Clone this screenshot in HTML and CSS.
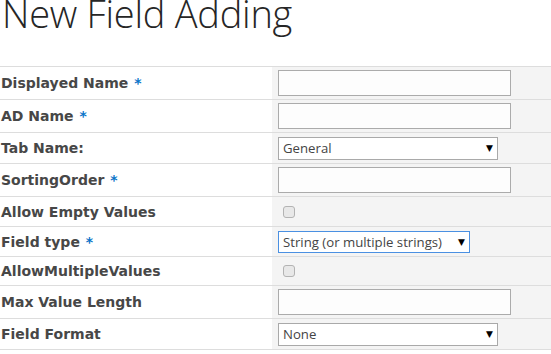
FILE: index.html
```html
<!DOCTYPE html>
<html lang="en">
<head>
    <meta charset="UTF-8">
    <title>New Field Adding</title>
    <link rel="stylesheet" href="styles.css">
</head>
<body>
    <div class="title-bar">
        <h1 class="page-title">New Field Adding</h1>
    </div>

    <div class="form-table">
        <div class="form-row row-text">
            <div class="form-label">Displayed Name <span class="req">*</span></div>
            <div class="form-value"><input type="text" class="text-input"></div>
        </div>
        <div class="form-row row-text">
            <div class="form-label">AD Name <span class="req">*</span></div>
            <div class="form-value"><input type="text" class="text-input"></div>
        </div>
        <div class="form-row row-select">
            <div class="form-label">Tab Name:</div>
            <div class="form-value">
                <div class="select-wrap wide">
                    <select class="select-input"><option>General</option></select>
                </div>
            </div>
        </div>
        <div class="form-row row-text">
            <div class="form-label">SortingOrder <span class="req">*</span></div>
            <div class="form-value"><input type="text" class="text-input"></div>
        </div>
        <div class="form-row row-check">
            <div class="form-label">Allow Empty Values</div>
            <div class="form-value"><input type="checkbox" class="check-input"></div>
        </div>
        <div class="form-row row-check">
            <div class="form-label">Field type <span class="req">*</span></div>
            <div class="form-value">
                <div class="select-wrap narrow">
                    <select class="select-input focused"><option>String (or multiple strings)</option></select>
                </div>
            </div>
        </div>
        <div class="form-row row-short">
            <div class="form-label">AllowMultipleValues</div>
            <div class="form-value"><input type="checkbox" class="check-input"></div>
        </div>
        <div class="form-row row-text">
            <div class="form-label">Max Value Length</div>
            <div class="form-value"><input type="text" class="text-input"></div>
        </div>
        <div class="form-row row-select">
            <div class="form-label">Field Format</div>
            <div class="form-value">
                <div class="select-wrap wide">
                    <select class="select-input"><option>None</option></select>
                </div>
            </div>
        </div>
    </div>
</body>
</html>
```

FILE: styles.css
```css
body {
    margin: 0;
    background: #fff;
    font-family: "DejaVu Sans", Verdana, sans-serif;
}

/* Titel-Bereich, 66px hoch */
.title-bar {
    height: 66px;
}
.page-title {
    margin: 0;
    padding-left: 2px;
    font-family: "Open Sans", "Segoe UI", sans-serif;
    font-weight: 300;
    font-size: 38px;
    letter-spacing: -0.25px;
    line-height: 44px;
    transform: translateY(-9px);
    color: #262626;
}

.form-table {
    border-top: 1px solid #ddd;
}

.form-row {
    display: grid;
    grid-template-columns: 272px 1fr;
    border-bottom: 1px solid #ddd;
}
.row-text { height: 32px; }
.row-select { height: 30px; }
.row-check { height: 29px; }
.row-short { height: 28px; }

.form-label {
    display: flex;
    align-items: center;
    padding-left: 1px;
    font-size: 14px;
    font-weight: bold;
    color: #474747;
    white-space: pre;
}
.req {
    color: #0a74c8;
    margin-left: 1px;
}

.form-value {
    display: flex;
    align-items: center;
    padding-left: 6px;
    background: #f4f4f4;
}

.text-input {
    box-sizing: border-box;
    width: 233px;
    height: 26px;
    margin: 0;
    border: 1px solid #ababab;
    background: #fdfdfd;
}

.select-wrap {
    position: relative;
}
.select-wrap.wide { width: 220px; }
.select-wrap.narrow { width: 192px; }
.select-wrap::after {
    content: "▼";
    position: absolute;
    right: 5px;
    top: 50%;
    transform: translateY(-50%);
    font-size: 9px;
    color: #000;
    pointer-events: none;
}

.select-input {
    box-sizing: border-box;
    width: 100%;
    height: 23px;
    margin: 0;
    padding: 0 0 0 4px;
    border: 1px solid #a9a9a9;
    background: #fff;
    appearance: none;
    -webkit-appearance: none;
    font-family: "Open Sans", "Segoe UI", sans-serif;
    font-size: 13.2px;
    color: #444;
}
.select-input.focused {
    height: 22px;
    border-color: #4a90e2;
}

.check-input {
    appearance: none;
    -webkit-appearance: none;
    box-sizing: border-box;
    width: 12px;
    height: 12px;
    margin: 0 0 0 5px;
    border: 1px solid #b3b3b3;
    border-radius: 3px;
    background: #e8e8e8;
}
```
